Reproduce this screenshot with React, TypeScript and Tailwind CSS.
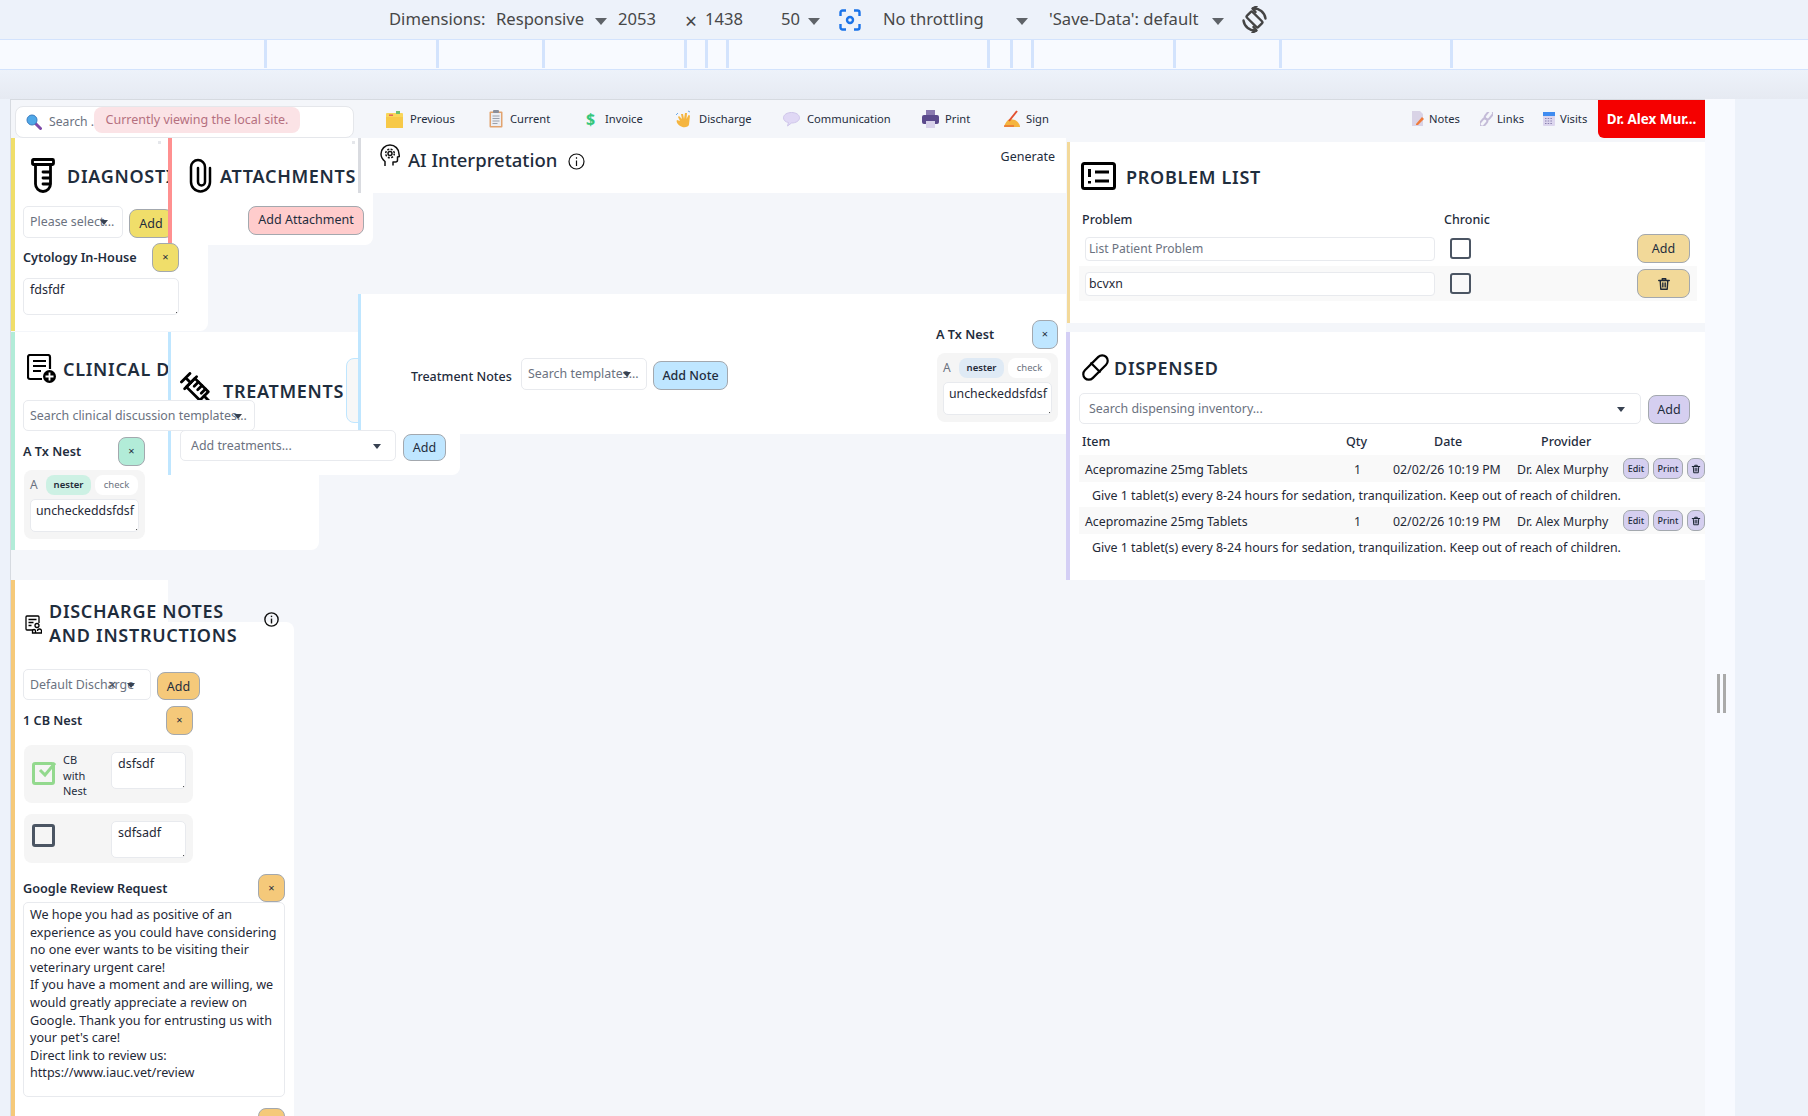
import React from "react";

const F = { fontFamily: '"Noto Sans", "Open Sans", Arial, sans-serif' };

function Caret() {
  return <span className="block w-0 h-0 border-l-[4px] border-r-[4px] border-t-[5px] border-l-transparent border-r-transparent border-t-[#374151]" />;
}
function DtCaret() {
  return <span className="inline-block w-0 h-0 border-l-[6px] border-r-[6px] border-t-[7px] border-l-transparent border-r-transparent border-t-[#5f6368]" />;
}
function Btn({ color, className = "", children }: { color: string; className?: string; children: React.ReactNode }) {
  return <button className={"flex items-center justify-center rounded-lg border border-[#a3a8ae] shrink-0 text-[#1f2d3d] text-[12.5px] pt-[2px] " + color + " " + className}>{children}</button>;
}
function XBtn({ color, className = "" }: { color: string; className?: string }) {
  return <Btn color={color} className={"w-[27px] h-[29px] !text-[11px] !pt-0 " + className}>×</Btn>;
}
function Title({ children, className = "" }: { children: React.ReactNode; className?: string }) {
  return <div className={"text-[18px] leading-[24px] font-semibold tracking-[0.7px] text-[#1f2d3d] whitespace-nowrap pt-[1px] " + className}>{children}</div>;
}
function Sel({ text, className = "", caretClass = "right-[12px]", z = "", extra }: { text: string; className?: string; caretClass?: string; z?: string; extra?: React.ReactNode }) {
  return (
    <div className={"relative flex items-center bg-white border border-[#e8eaee] rounded-[5px] text-[12.4px] text-[#6b7280] overflow-hidden whitespace-nowrap shrink-0 pt-[1px] " + className + " " + z}>
      <span>{text}</span>
      {extra}
      <span className={"absolute top-[13px] " + caretClass}><Caret /></span>
    </div>
  );
}
function Area({ text, className = "" }: { text: string; className?: string }) {
  return (
    <div className={"relative bg-white border border-[#e8eaee] rounded-[5px] text-[12.5px] leading-[17.6px] text-[#1f2937] px-[6px] pt-[2px] " + className}>
      {text}
      <span className="absolute right-[1px] bottom-[1px] w-[1px] h-[1px] bg-[#555]" />
    </div>
  );
}
function Nest({ pill, className = "" }: { pill: string; className?: string }) {
  return (
    <div className={"w-[121px] h-[69px] rounded-lg bg-[#f5f5f5] px-[6px] pt-[5px] " + className}>
      <div className="flex items-center h-[20px] text-[#6b7280] text-[12px]">
        <span className="w-[16px]">A</span>
        <span className={"w-[45px] h-[20px] rounded-lg flex items-center justify-center text-[9.5px] font-semibold text-[#1f2937] " + pill}>nester</span>
        <span className="ml-[4px] w-[43px] h-[20px] rounded-lg bg-white flex items-center justify-center text-[9.5px] text-[#6b7280]">check</span>
      </div>
      <Area text="uncheckeddsfdsf" className="w-[109px] h-[33px] mt-[4px] !px-[5px] !text-[12.3px] whitespace-nowrap" />
    </div>
  );
}
function Trash({ size = 14 }: { size?: number }) {
  return (
    <svg width={size} height={size} viewBox="0 0 24 24" fill="none" stroke="#1f2937" strokeWidth="2.4" strokeLinecap="round" strokeLinejoin="round">
      <path d="M3 6h18M9 6V3h6v3M5.5 6l1 15h11l1-15M10 10v7M14 10v7" />
    </svg>
  );
}
const Dot = ({ className = "" }: { className?: string }) => <span className={"absolute w-[3px] h-[3px] bg-[#e5e7eb] " + className} />;

/* ---- nav icons ---- */
const IcSearch = () => (
  <svg width="16" height="16" viewBox="0 0 16 16"><path d="M9.5 9.5l5 5" stroke="#7e4aa8" strokeWidth="3" strokeLinecap="round" /><circle cx="6" cy="6" r="5" fill="#4fa8e8" stroke="#3a7cc0" /></svg>
);
const IcFolder = () => (
  <svg width="17" height="17" viewBox="0 0 17 17"><rect x="0" y="2" width="17" height="15" rx="1" fill="#f9d65a" /><rect x="0" y="6" width="17" height="11" fill="#f7c948" /><rect x="10" y="0" width="4" height="3" fill="#6cc070" /><rect x="3" y="3.5" width="4" height="1.4" fill="#e25d5d" /></svg>
);
const IcClip = () => (
  <svg width="14" height="18" viewBox="0 0 14 18"><rect x="0.5" y="1.5" width="13" height="16" rx="1" fill="#e2a36f" /><rect x="2" y="3" width="10" height="13" fill="#eceef3" /><rect x="4" y="0" width="6" height="3" rx="1" fill="#8b8f9a" /><path d="M3.5 6h7M3.5 8.5h7M3.5 11h7M3.5 13.5h5" stroke="#9aa0ab" /></svg>
);
const IcHand = () => (
  <svg width="18" height="18" viewBox="0 0 18 18"><path d="M5 16c-3-2-4-5-3-6l3 1-2-4 1-1 3 3-1-5h2l1 5 1-6h2l-.5 6 2-4 1.500.5-1 9c-.5 3-6 4-9.500 1z" fill="#f5b53f" /><path d="M1 5l2-2M13 1l2 1" stroke="#6aa9e9" /></svg>
);
const IcBubble = () => (
  <svg width="17" height="17" viewBox="0 0 17 17"><path d="M8.500 1.500c4.500 0 8 2.300 8 5.300s-3.500 5.200-8 5.200l-4 3 1-3.500C2.500 11 .5 9.300.5 6.800.5 3.800 4 1.500 8.500 1.500z" fill="#e0d8f5" stroke="#cfc6ea" /></svg>
);
const IcPrint = () => (
  <svg width="17" height="18" viewBox="0 0 17 18"><rect x="4" y="0" width="9" height="6" fill="#8a7ab0" /><rect x="0" y="5" width="17" height="9" rx="2" fill="#5b4a8c" /><rect x="4" y="11" width="9" height="7" fill="#d8d2ea" /></svg>
);
const IcSign = () => (
  <svg width="18" height="18" viewBox="0 0 18 18"><path d="M1 17c1-4 3-7 6-8l5 1c2 1 4 3 5 6v1z" fill="#f5b53f" /><path d="M6 11L14 1" stroke="#e2502f" strokeWidth="2" /><path d="M1 16h10" stroke="#e2502f" /></svg>
);
const IcNote = () => (
  <svg width="12" height="15" viewBox="0 0 12 15"><path d="M0 0h8l3 3v12H0z" fill="#d9d3e6" /><path d="M4 13l6-7 2 2-6 6H4z" fill="#f07a3a" /></svg>
);
const IcLink = () => (
  <svg width="13" height="14" viewBox="0 0 13 14" fill="none" stroke="#c4bcd8" strokeWidth="2"><rect x="6.500" y="-2" width="5" height="10" rx="2.500" transform="rotate(40 9 3)" /><rect x="1" y="6" width="5" height="9" rx="2.500" transform="rotate(40 3.500 10.500)" /></svg>
);
const IcCal = () => (
  <svg width="12" height="14" viewBox="0 0 12 14"><rect width="12" height="14" rx="1" fill="#dcd6ee" /><rect width="12" height="4" fill="#3f8cf0" /><path d="M2 6.500h8M2 9h8M2 11.500h8" stroke="#8a80b0" strokeDasharray="1.500 1.200" /></svg>
);

/* ---- panel icons ---- */
const IcTube = () => (
  <svg width="24" height="35" viewBox="0 0 24 35" fill="none" stroke="#000" strokeWidth="2.800" strokeLinejoin="round" strokeLinecap="round">
    <rect x="1.500" y="1.500" width="21" height="5" rx="1" />
    <path d="M4.500 6.500V26a7.500 7.500 0 0015 0V6.500M12 14h7.500M12 20h7.500M12 26h7" />
  </svg>
);
const IcPaperclip = () => (
  <svg width="23" height="35" viewBox="0 0 23 35" fill="none" stroke="#000" strokeWidth="2.500" strokeLinecap="round">
    <path d="M21 10v14a9.500 9.500 0 01-19 0V9a7 7 0 0114 0v15a3.500 3.500 0 01-7 0V10" />
  </svg>
);
const IcHead = () => (
  <svg width="20" height="24" viewBox="0 0 20 24" fill="none" stroke="#111" strokeWidth="1.500" strokeLinejoin="round">
    <path d="M5 22v-4.500C2.500 15.500 1 13 1 10a9 9 0 0118 0c0 1 .5 2 .5 2.500L17.500 13v3a2 2 0 01-2 2H13v3.500" />
    <circle cx="10" cy="9.500" r="2" />
    <circle cx="10" cy="9.500" r="4.300" strokeDasharray="2 1.400" />
  </svg>
);
const IcInfo = ({ s = 17, w = 1.200 }: { s?: number; w?: number }) => (
  <svg width={s} height={s} viewBox="0 0 17 17" fill="none" stroke="#111" strokeWidth={w}><circle cx="8.500" cy="8.500" r="7.500" /><path d="M8.500 7.500v5.500" /><path d="M8.500 4.200v1.600" /></svg>
);
const IcProblem = () => (
  <svg width="35" height="28" viewBox="0 0 35 28" fill="none" stroke="#000">
    <rect x="1.500" y="1.500" width="32" height="25" rx="2" strokeWidth="3" />
    <path d="M8.500 7v8" strokeWidth="3" /><path d="M8.500 19v2.500" strokeWidth="3" />
    <path d="M14 10h14M14 19h14" strokeWidth="3" />
  </svg>
);
const IcPill = () => (
  <svg width="27" height="27" viewBox="0 0 27 27" fill="none" stroke="#000" strokeWidth="2.200">
    <rect x="-1.500" y="8" width="30" height="11" rx="5.500" transform="rotate(-45 13.500 13.500)" />
    <path d="M8.500 8.500l10 10" />
  </svg>
);
const IcClinical = () => (
  <svg width="29" height="29" viewBox="0 0 29 29" fill="none" stroke="#000" strokeWidth="2.200">
    <path d="M15 25H3a2 2 0 01-2-2V3a2 2 0 012-2h18a2 2 0 012 2v12" />
    <path d="M6 7h13M6 12h13M6 17h8" />
    <circle cx="22.500" cy="22.500" r="6.500" fill="#000" stroke="none" />
    <path d="M22.500 18.500v8M18.500 22.500h8" stroke="#fff" strokeWidth="1.800" />
  </svg>
);
const IcSyringe = () => (
  <svg width="34" height="34" viewBox="0 0 34 34" fill="none" stroke="#000" strokeWidth="2.800" strokeLinecap="round" strokeLinejoin="round">
    <g transform="rotate(-45 17 17)">
      <path d="M11 1h12M17 1v7" />
      <rect x="11" y="8" width="12" height="19" />
      <path d="M8.500 8h17M17 13h6M17 18h6M17 23h6M17 27v7" />
    </g>
  </svg>
);
const IcDischarge = () => (
  <svg width="17" height="19" viewBox="0 0 17 19" fill="none" stroke="#000" strokeWidth="1.300">
    <path d="M8 15H2a1 1 0 01-1-1V2a1 1 0 011-1h11a1 1 0 011 1v6" />
    <path d="M3.500 4.500h8M3.500 7.500h5M3.500 10.500h3" />
    <circle cx="12" cy="10.500" r="2" />
    <path d="M7.500 18v-2a1.500 1.500 0 013 0v2zM10.500 18h6v-2a2 2 0 00-4 0" />
  </svg>
);
const IcRotate = () => (
  <svg width="27" height="27" viewBox="0 0 27 27" fill="none" stroke="#444" strokeWidth="2.400" strokeLinecap="round" strokeLinejoin="round">
    <rect x="9.500" y="5.500" width="8" height="16" rx="1.500" transform="rotate(-45 13.500 13.500)" />
    <path d="M12 2.500a11.500 11.500 0 0112.500 10M15 24.500a11.500 11.500 0 01-12.500-10" />
    <path d="M15.500 0.500L11.500 2.500l3 3.500M11.500 26.500l4-2-3-3.500" />
  </svg>
);
const IcCapture = () => (
  <svg width="22" height="22" viewBox="0 0 22 22" fill="none" stroke="#1a73e8" strokeWidth="2.400">
    <path d="M1.500 7V3.500a2 2 0 012-2H7M15 1.500h3.500a2 2 0 012 2V7M20.500 15v3.500a2 2 0 01-2 2H15M7 20.500H3.500a2 2 0 01-2-2V15" />
    <circle cx="11" cy="11" r="3" />
  </svg>
);

const H = "text-[12.5px] font-medium text-[#1f2d3d]";
const B = "text-[12.7px] font-semibold text-[#1f2d3d] whitespace-nowrap pt-[1px]";
const Row = () => (
  <div className="flex items-center h-[27px] bg-[#f9f9f9] pl-[6px] pt-[3px] text-[12.3px] text-[#1f2937] whitespace-nowrap">
    <span className="w-[269px]">Acepromazine 25mg Tablets</span>
    <span className="w-[39px]">1</span>
    <span className="w-[124px]">02/02/26 10:19 PM</span>
    <span className="w-[106px]">Dr. Alex Murphy</span>
    <Btn color="bg-[#d5cff0]" className="w-[26px] h-[21px] !text-[9px] font-medium !rounded-[7px] -mt-[3px] !pt-0">Edit</Btn>
    <Btn color="bg-[#d5cff0]" className="w-[30px] h-[21px] !text-[9px] font-medium ml-[4px] !rounded-[7px] -mt-[3px] !pt-0">Print</Btn>
    <Btn color="bg-[#d5cff0]" className="w-[18px] h-[21px] ml-[4px] !rounded-[7px] -mt-[3px] !pt-0"><Trash size={10} /></Btn>
  </div>
);
const Note = () => (
  <div className="h-[25px] flex items-center pl-[13px] pt-[3px] text-[12.4px] text-[#1f2937] whitespace-nowrap">Give 1 tablet(s) every 8-24 hours for sedation, tranquilization. Keep out of reach of children.</div>
);

export default function App() {
  return (
    <div style={F} className="w-[1808px] h-[1116px] overflow-hidden bg-[#edf2fa] flex flex-col">
      {/* devtools toolbar */}
      <div className="h-[40px] shrink-0 border-b border-[#d3e3fd] flex items-center pl-[389px] text-[16.6px] text-[#474747] whitespace-nowrap">
        <span className="w-[107px]">Dimensions:</span>
        <span className="w-[99px]">Responsive</span>
        <span className="w-[23px]"><DtCaret /></span>
        <span className="w-[67px]">2053</span>
        <span className="w-[20px] text-[21px] leading-[24px] mt-[2px]">×</span>
        <span className="w-[76px]">1438</span>
        <span className="w-[27px]">50</span>
        <span className="w-[31px]"><DtCaret /></span>
        <span className="w-[44px] flex"><IcCapture /></span>
        <span className="w-[133px]">No throttling</span>
        <span className="w-[33px]"><DtCaret /></span>
        <span className="w-[163px]">'Save-Data': default</span>
        <span className="w-[29px]"><DtCaret /></span>
        <span className="flex"><IcRotate /></span>
      </div>
      {/* ruler */}
      <div className="h-[30px] shrink-0 border-b border-[#d3e3fd] bg-[#f8faff] flex items-stretch pb-[1px]">
        <div className="w-[267px] border-r-[3px] border-[#d3e3fd]" />
        <div className="w-[172px] border-r-[3px] border-[#d3e3fd]" />
        <div className="w-[106px] border-r-[3px] border-[#d3e3fd]" />
        <div className="w-[142px] border-r-[3px] border-[#d3e3fd]" />
        <div className="w-[21px] border-r-[3px] border-[#d3e3fd]" />
        <div className="w-[21px] border-r-[3px] border-[#d3e3fd]" />
        <div className="w-[261px] border-r-[3px] border-[#d3e3fd]" />
        <div className="w-[23px] border-r-[3px] border-[#d3e3fd]" />
        <div className="w-[21px] border-r-[3px] border-[#d3e3fd]" />
        <div className="w-[142px] border-r-[3px] border-[#d3e3fd]" />
        <div className="w-[106px] border-r-[3px] border-[#d3e3fd]" />
        <div className="w-[171px] border-r-[3px] border-[#d3e3fd]" />
      </div>
      {/* viewport */}
      <div className="h-[29px] shrink-0 bg-gradient-to-b from-[#edf2fa] to-[#e6eaf2]" />
      <div className="flex-1 flex pl-[10px] min-h-0">
        <div className="w-[1695px] h-full relative bg-[#f4f6fa] border-t border-l border-[#d6dae0]">
          {/* nav */}
          <div className="h-[38px] flex items-center text-[11.2px] text-[#1f2d3d] whitespace-nowrap">
            <div className="ml-[4px] w-[339px] h-[32px] mt-[5px] bg-white border border-[#e5e7eb] rounded-lg flex items-center pl-[10px] text-[12.2px] text-[#6b7280] gap-[7px]">
              <IcSearch /><span className="pt-[2px]">Search ...</span>
            </div>
            <div className="ml-[32px] w-[103px] flex items-center gap-[7px]"><IcFolder />Previous</div>
            <div className="w-[97px] flex items-center gap-[7px]"><IcClip />Current</div>
            <div className="w-[89px] flex items-center gap-[9px]"><span className="text-[16px] leading-[16px] font-bold text-[#34c77b] w-[10px]">$</span>Invoice</div>
            <div className="w-[108px] flex items-center gap-[6px]"><IcHand />Discharge</div>
            <div className="w-[139px] flex items-center gap-[7px]"><IcBubble />Communication</div>
            <div className="w-[81px] flex items-center gap-[6px]"><IcPrint />Print</div>
            <div className="w-[409px] flex items-center gap-[5px]"><IcSign />Sign</div>
            <div className="w-[68px] flex items-center gap-[5px]"><IcNote />Notes</div>
            <div className="w-[63px] flex items-center gap-[4px]"><IcLink />Links</div>
            <div className="w-[55px] flex items-center gap-[5px]"><IcCal />Visits</div>
            <div className="w-[107px] h-[38px] bg-[#f50000] rounded-bl-md flex items-center justify-center text-white font-bold text-[13.400px]">Dr. Alex Mur...</div>
          </div>
          {/* toast */}
          <div className="absolute z-40 left-[83px] top-[7px] w-[206px] h-[26px] rounded-lg bg-[#fbe3e6] flex items-center justify-center pt-[1px] text-[12.5px] text-[#b5707f] whitespace-nowrap">Currently viewing the local site.</div>

          {/* Diagnostics */}
          <section className="absolute left-[0px] top-[38px] w-[197px] h-[193px] bg-white border-l-4 border-[#f0de6a] rounded-br-lg pl-[8px]">
            <Dot className="left-[143px] top-[3px]" />
            <div className="flex items-center gap-[12px] pt-[20px] pl-[8px] h-[55px]"><IcTube /><Title>DIAGNOSTICS</Title></div>
            <div className="flex gap-[6px] mt-[13px]">
              <Sel text="Please select..." className="w-[100px] h-[32px] pl-[6px]" caretClass="right-[14px]" />
              <Btn color="bg-[#f0de6a]" className="w-[44px] h-[29px] mt-[3px]">Add</Btn>
            </div>
            <div className="flex items-center justify-between w-[156px] mt-[5px] h-[29px]">
              <span className={B}>Cytology In-House</span>
              <XBtn color="bg-[#f0de6a]" className="relative z-30" />
            </div>
            <Area text="fdsfdf" className="w-[156px] h-[37px] mt-[6px]" />
          </section>

          {/* Attachments */}
          <section className="absolute left-[157px] top-[38px] w-[205px] h-[107px] bg-white border-l-4 border-[#ff9090] rounded-br-lg">
            <Dot className="left-[180px] top-[3px]" />
            <div className="flex items-center gap-[8px] pt-[20px] pl-[17px] h-[55px]"><IcPaperclip /><Title>ATTACHMENTS</Title></div>
            <div className="flex mt-[13px] pl-[76px]">
              <Btn color="bg-[#ffcccc]" className="w-[116px] h-[29px] !pt-0">Add Attachment</Btn>
            </div>
          </section>
          <div className="absolute left-[347px] top-[38px] w-[3px] h-[55px] bg-[#d9dbe0]" />

          {/* AI */}
          <section className="absolute left-[350px] top-[38px] w-[705px] h-[55px] bg-white flex justify-between pl-[19px] pr-[11px]">
            <div className="flex items-start gap-[8px] pt-[6px]">
              <IcHead />
              <span className="text-[18.500px] leading-[30px] font-medium text-[#1f2d3d] mt-[1px] whitespace-nowrap">AI Interpretation</span>
              <span className="mt-[9px] ml-[3px]"><IcInfo /></span>
            </div>
            <span className="text-[12.5px] text-[#1f2d3d] pt-[10px]">Generate</span>
          </section>

          {/* Clinical */}
          <section className="absolute left-[0px] top-[232px] w-[308px] h-[218px] bg-white border-l-4 border-[#b2ecd8] rounded-br-lg pl-[8px]">
            <div className="flex items-center gap-[7px] pl-[4px] pt-[21px] h-[51px]"><IcClinical /><Title>CLINICAL DISCUSSION</Title></div>
            <Sel text="Search clinical discussion templates..." className="w-[232px] h-[31px] mt-[17px] pl-[6px]" caretClass="right-[12px]" z="!relative z-30" />
            <div className="flex items-center justify-between w-[122px] mt-[6px] h-[29px]">
              <span className={B}>A Tx Nest</span>
              <XBtn color="bg-[#b2ecd8]" />
            </div>
            <Nest pill="bg-[#cdf1e4]" className="mt-[4px] ml-[1px]" />
          </section>

          {/* Treatments */}
          <section className="absolute left-[157px] top-[232px] w-[292px] h-[143px] bg-white border-l-[3px] border-[#bfe6ff] rounded-br-lg">
            <div className="flex items-start h-[98px]">
              <span className="ml-[9px] mt-[40px] flex"><IcSyringe /></span>
              <Title className="ml-[9px] mt-[46px]">TREATMENTS</Title>
              <div className="ml-[2px] mt-[26px] w-[30px] h-[65px] rounded-l-lg bg-[#f7f7f7] border border-[#bfe6ff]" />
            </div>
            <div className="flex gap-[7px] pl-[9px]">
              <Sel text="Add treatments..." className="w-[216px] h-[31px] pl-[10px]" caretClass="right-[14px]" z="!relative z-30" />
              <Btn color="bg-[#bfe6ff]" className="w-[43px] h-[27px] mt-[4px] relative z-30">Add</Btn>
            </div>
          </section>

          {/* Treatment notes */}
          <section className="absolute left-[347px] top-[194px] w-[708px] h-[140px] bg-white border-l-[3px] border-[#bfe6ff] flex">
            <div className="flex items-start pl-[50px] w-[575px]">
              <span className={H + " mt-[74px] w-[110px] whitespace-nowrap"}>Treatment Notes</span>
              <Sel text="Search templates..." className="w-[126px] h-[32px] mt-[64px] pl-[6px]" caretClass="right-[15px]" />
              <Btn color="bg-[#bfe6ff]" className="w-[75px] h-[29px] ml-[6px] mt-[67px] font-medium">Add Note</Btn>
            </div>
            <div className="w-[122px]">
              <div className="flex items-center justify-between h-[29px] mt-[26px]">
                <span className={B}>A Tx Nest</span>
                <XBtn color="bg-[#bfe6ff]" className="!w-[26px]" />
              </div>
              <Nest pill="bg-[#dfeaf5]" className="mt-[4px] ml-[1px]" />
            </div>
          </section>

          {/* Problem list */}
          <section className="absolute left-[1056px] top-[42px] w-[638px] h-[181px] bg-white border-l-[3px] border-[#f3d99a] pl-[9px] pr-[8px]">
            <div className="flex items-center gap-[10px] pl-[2px] pt-[20px] h-[48px]"><IcProblem /><Title>PROBLEM LIST</Title></div>
            <div className="flex mt-[21px] h-[18px] items-center pl-[3px]">
              <span className={H + " w-[362px]"}>Problem</span>
              <span className={H}>Chronic</span>
            </div>
            <div className="flex items-center h-[29px] mt-[5px] pl-[6px]">
              <div className="w-[350px] h-[24px] border border-[#e8eaee] rounded-[4px] flex items-center pl-[3px] pt-[2px] text-[12.1px] text-[#6b7280]">List Patient Problem</div>
              <span className="ml-[15px] w-[21px] h-[21px] rounded-[3px] border-2 border-[#4b5563]" />
              <Btn color="bg-[#f2d999]" className="w-[53px] h-[29px] ml-[166px]">Add</Btn>
            </div>
            <div className="flex items-center h-[35px] mt-[3px] pl-[6px] bg-[#f9f9f9]">
              <div className="w-[350px] h-[24px] bg-white border border-[#e8eaee] rounded-[4px] flex items-center pl-[3px] pt-[2px] text-[12.3px] text-[#1f2937]">bcvxn</div>
              <span className="ml-[15px] w-[21px] h-[21px] rounded-[3px] border-2 border-[#4b5563]" />
              <Btn color="bg-[#f2d999]" className="w-[53px] h-[29px] ml-[166px] !pt-0"><Trash /></Btn>
            </div>
          </section>

          {/* Dispensed */}
          <section className="absolute left-[1055px] top-[232px] w-[639px] h-[248px] bg-white border-l-4 border-[#d4cff5] pl-[9px] overflow-hidden">
            <div className="flex items-center gap-[5px] pl-[3px] pt-[22px] h-[48px]"><IcPill /><Title>DISPENSED</Title></div>
            <div className="flex gap-[7px] mt-[13px]">
              <Sel text="Search dispensing inventory..." className="w-[562px] h-[31px] pl-[9px]" caretClass="right-[15px]" />
              <Btn color="bg-[#d5cff0]" className="w-[42px] h-[29px] mt-[2px]">Add</Btn>
            </div>
            <div className={H + " flex items-center h-[31px] pt-[6px] pl-[3px]"}>
              <span className="w-[264px]">Item</span>
              <span className="w-[88px]">Qty</span>
              <span className="w-[107px]">Date</span>
              <span>Provider</span>
            </div>
            <Row /><Note /><Row /><Note />
          </section>

          {/* Discharge */}
          <section className="absolute left-[0px] top-[480px] w-[283px] h-[540px] border-l-4 border-[#f5c97a]">
            <div className="absolute left-0 top-0 w-[153px] h-[60px] bg-white" />
            <div className="absolute left-0 top-[42px] w-[279px] h-[498px] bg-white rounded-tr-lg" />
            <div className="relative pl-[8px]">
              <div className="flex items-center h-[69px] pt-[15px]">
                <span className="ml-[2px] mt-[4px] flex"><IcDischarge /></span>
                <Title className="ml-[7px] !leading-[24px]">DISCHARGE NOTES<br />AND INSTRUCTIONS</Title>
                <span className="ml-[27px] -mt-[5px] flex"><IcInfo s={15} w={1.600} /></span>
              </div>
              <div className="flex gap-[6px] mt-[20px]">
                <Sel
                  text="Default Discharge"
                  className="w-[128px] h-[31px] pl-[6px]"
                  caretClass="right-[15px]"
                  extra={<span className="absolute left-[84px] top-[4px] text-[15px] leading-[20px] text-[#4b5563]">×</span>}
                />
                <Btn color="bg-[#f5c97a]" className="w-[43px] h-[28px] mt-[3px]">Add</Btn>
              </div>
              <div className="flex items-center justify-between w-[170px] mt-[6px] h-[29px]">
                <span className={B}>1 CB Nest</span>
                <XBtn color="bg-[#f5c97a]" />
              </div>
              <div className="flex items-start w-[169px] h-[58px] mt-[10px] ml-[1px] bg-[#f5f5f5] rounded-lg pl-[8px]">
                <span className="mt-[17px] w-[23px] h-[23px] rounded-[3px] border-[3px] border-[#93d98e] relative">
                  <svg className="absolute -top-[4px] left-[2px]" width="20" height="18" viewBox="0 0 20 18" fill="none" stroke="#93d98e" strokeWidth="3"><path d="M3 9l5 5 10-12" /></svg>
                </span>
                <span className="ml-[8px] mt-[7px] w-[40px] text-[11px] leading-[15.500px] text-[#1f2d3d]">CB<br />with<br />Nest</span>
                <Area text="dsfsdf" className="w-[75px] h-[37px] mt-[7px] ml-[8px]" />
              </div>
              <div className="flex items-start w-[169px] h-[49px] mt-[11px] ml-[1px] bg-[#f5f5f5] rounded-lg pl-[8px]">
                <span className="mt-[10px] w-[23px] h-[23px] rounded-[3px] border-[3px] border-[#4b5563]" />
                <Area text="sdfsadf" className="w-[75px] h-[37px] mt-[7px] ml-[56px]" />
              </div>
              <div className="flex items-center justify-between w-[262px] h-[28px] mt-[11px]">
                <span className={B}>Google Review Request</span>
                <XBtn color="bg-[#f5c97a]" className="!h-[28px]" />
              </div>
              <div className="relative w-[262px] h-[195px] bg-white border border-[#e8eaee] rounded-[5px] pl-[6px] pr-[2px] pt-[3px] text-[12.6px] leading-[17.600px] text-[#1f2937]">
                We hope you had as positive of an experience as you could have considering no one ever wants to be visiting their veterinary urgent care!<br />
                If you have a moment and are willing, we would greatly appreciate a review on Google. Thank you for entrusting us with your pet's care!<br />
                Direct link to review us:<br />
                https://www.iauc.vet/review
              </div>
              <Btn color="bg-[#f5c97a]" className="w-[27px] h-[29px] mt-[11px] ml-[235px]">{""}</Btn>
            </div>
          </section>
        </div>
        <div className="w-[30px] h-full bg-[#f8faff] flex justify-center gap-[3px] pl-[3px] pt-[575px]">
          <span className="w-[3px] h-[39px] bg-[#aaaaaa]" />
          <span className="w-[3px] h-[39px] bg-[#aaaaaa]" />
        </div>
      </div>
    </div>
  );
}
